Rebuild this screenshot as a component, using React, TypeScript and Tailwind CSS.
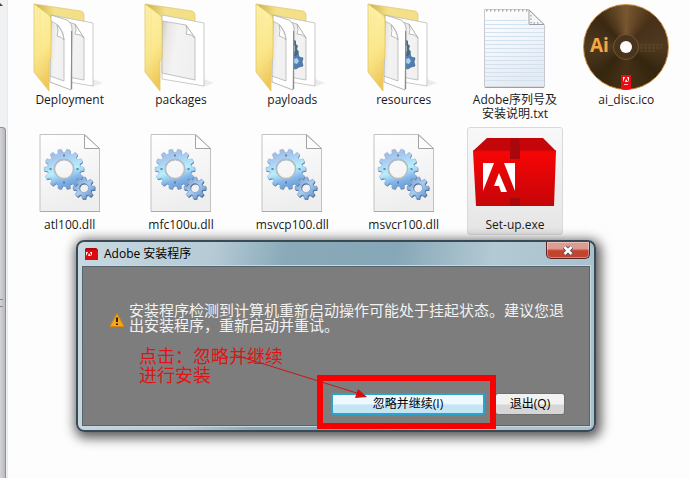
import React from 'react';

function gearPath(cx: number, cy: number, outer: number, inner: number, hole: number, teeth: number) {
  const points: string[] = [];
  const step = (Math.PI * 2) / teeth;
  const at = (r: number, a: number) => `${(cx + r * Math.cos(a)).toFixed(2)} ${(cy + r * Math.sin(a)).toFixed(2)}`;
  for (let i = 0; i < teeth; i++) {
    const a = i * step;
    points.push(at(inner, a - step * 0.34), at(outer, a - step * 0.2), at(outer, a + step * 0.2), at(inner, a + step * 0.34));
  }
  return `M${points.join('L')}Z M${cx - hole} ${cy}a${hole} ${hole} 0 1 0 ${hole * 2} 0a${hole} ${hole} 0 1 0 ${-hole * 2} 0Z`;
}

// Gradients shared by every file icon
function IconDefs() {
  return (
    <svg className="absolute size-0" aria-hidden="true">
      <defs>
        <linearGradient id="flap" x1="0" y1="0" x2="0.2" y2="1">
          <stop offset="0" stopColor="#fdf3ae" />
          <stop offset="0.6" stopColor="#fbe88c" />
          <stop offset="1" stopColor="#f0c95c" />
        </linearGradient>
        <linearGradient id="back" x1="0" y1="0" x2="1" y2="0">
          <stop offset="0" stopColor="#c9ae48" />
          <stop offset="0.4" stopColor="#f3e08a" />
          <stop offset="1" stopColor="#f3df85" />
        </linearGradient>
        <linearGradient id="sheet" x1="0" y1="0" x2="1" y2="0.3">
          <stop offset="0" stopColor="#cfc8bc" />
          <stop offset="0.2" stopColor="#e9e7e4" />
          <stop offset="0.5" stopColor="#f3f3f3" />
          <stop offset="1" stopColor="#f0f0f1" />
        </linearGradient>
        <linearGradient id="page" x1="0" y1="0" x2="0.3" y2="1">
          <stop offset="0" stopColor="#ffffff" />
          <stop offset="1" stopColor="#eeeeef" />
        </linearGradient>
        <linearGradient id="note" x1="0" y1="0" x2="0.4" y2="1">
          <stop offset="0" stopColor="#ffffff" />
          <stop offset="1" stopColor="#e6ebf3" />
        </linearGradient>
        <linearGradient id="gear" x1="0.3" y1="0" x2="0.6" y2="1">
          <stop offset="0" stopColor="#9fb6e0" />
          <stop offset="0.25" stopColor="#a9cdf1" />
          <stop offset="0.55" stopColor="#b6effb" />
          <stop offset="0.78" stopColor="#82b6ec" />
          <stop offset="1" stopColor="#6c9ad6" />
        </linearGradient>
        <linearGradient id="smallGear" x1="0" y1="0" x2="1" y2="1">
          <stop offset="0" stopColor="#7396c2" />
          <stop offset="0.5" stopColor="#a9cdf2" />
          <stop offset="1" stopColor="#5384c2" />
        </linearGradient>
        <linearGradient id="carton" x1="0" y1="0" x2="0" y2="1">
          <stop offset="0" stopColor="#f80506" />
          <stop offset="1" stopColor="#c50508" />
        </linearGradient>
      </defs>
    </svg>
  );
}

function FolderIcon({ sheets = 2, gears = false }: { sheets?: number; gears?: boolean }) {
  return (
    <svg className="size-[88px]" viewBox="0 0 88 88" aria-hidden="true">
      <path d="M67 76L77 80L66 84Z" fill="#ececec" />
      <path d="M8 1L55 8Q58 9 58 12V32L25 26Z" fill="url(#back)" stroke="#dfc56c" strokeWidth="0.7" />
      <path d="M25 12L67 20V83L25 76Z" fill="#fff" stroke="#bdbdbd" strokeWidth="0.8" />
      {sheets === 1 ? (
        <>
          <path d="M25 18L49 22L58 35V77L25 70Z" fill="url(#sheet)" stroke="#b4b4b4" strokeWidth="0.8" />
          <path d="M49 22Q51 28 49 31Q55 31 58 35Z" fill="#fff" stroke="#a9a9a9" strokeWidth="0.8" />
        </>
      ) : (
        <>
          <path d="M42 19L49 21L58 35V77L42 74Z" fill="url(#sheet)" stroke="#b4b4b4" strokeWidth="0.8" />
          <path d="M49 21Q51 28 49 31Q55 31 58 35Z" fill="#fff" stroke="#a9a9a9" strokeWidth="0.8" />
          {gears && (
            <>
              <path d="M45 36l3 2v3l2 2-1 3 2 3-2 4-4 2Z" fill="#4c6b88" />
              <path d="M45 42l2 1v5l-2 2Z" fill="#9fc3df" />
              <path d="M45 52l2 1 3-3 1 4 4 1-1 4 1 4-4 1-3 2-3-1Z" fill="#4b80b8" stroke="#35536f" strokeWidth="0.6" />
              <path d="M46 56l3-1 2 3-2 3-3-1Z" fill="#abd0ee" />
            </>
          )}
          <path d="M25 12L41 17Q46 20 46 26L45 87L24 79Z" fill="#fff" stroke="#a7a7a7" strokeWidth="0.8" />
          <path d="M45.600 28V86" stroke="#8d8d8d" strokeWidth="1.200" />
          <path d="M25 18L32 22Q38 29 38 36V78L24 73Z" fill="url(#sheet)" stroke="#b4b4b4" strokeWidth="0.8" />
          <path d="M31 22Q33 28 31 33Q36 34 38 37Q37 28 31 22Z" fill="#fff" stroke="#a9a9a9" strokeWidth="0.8" />
        </>
      )}
      <path d="M8 1L23 12Q25 14 25 17V55L23 58V88L8 69Z" fill="url(#flap)" stroke="#e3c765" strokeWidth="0.8" />
      <path d="M11 4V70M14 7V73" stroke="#f5e08c" strokeWidth="0.6" />
    </svg>
  );
}

function TextIcon() {
  return (
    <svg className="size-[88px]" viewBox="0 0 88 88" aria-hidden="true">
      <path d="M13.500 6.500H58L73.500 22V84H13.500Z" fill="url(#note)" stroke="#c6cad0" />
      <path d="M14 84.500H73" stroke="#9b9fa5" />
      <path d="M14 17.500H56M14 21.500H57M14 25.500H73M14 29.500H73M14 33.500H73M14 37.500H73M14 41.500H73M14 45.500H73M14 49.500H73M14 53.500H73M14 57.500H73M14 61.500H73M14 65.500H73M14 69.500H73M14 73.500H73M14 77.500H73" stroke="#d3e1ef" />
      <path d="M15 7.500H58" stroke="#aaa" strokeWidth="2" strokeDasharray="1.500 2.500" />
      <path d="M58 7V21.500H73Z" fill="#f4f5f7" stroke="#9b9fa4" />
      <path d="M60 12V20H68" fill="none" stroke="#8a8a8a" strokeDasharray="1.500 2" />
    </svg>
  );
}

function DllIcon() {
  const big = gearPath(38, 41, 20, 16.5, 10, 14);
  const small = gearPath(58, 60, 11, 8, 4.5, 8);
  return (
    <svg className="size-[88px]" viewBox="0 0 88 88" aria-hidden="true">
      <path d="M14 6.500H59L73.500 21V83.500H14Z" fill="url(#page)" stroke="#c2c2c2" />
      <path d="M14 83.500H74" stroke="#a9a9a9" />
      <path d="M58.500 7V20.500H73.500Z" fill="#fdfdfd" stroke="#a3a3a3" />
      <path d={small} transform="translate(.6 1)" fill="#44668f" fillRule="evenodd" />
      <path d={small} fill="url(#smallGear)" stroke="#6288b6" strokeWidth="0.5" fillRule="evenodd" />
      <path d={big} transform="translate(.4 1)" fill="#5476a0" fillRule="evenodd" />
      <path d={big} fill="url(#gear)" stroke="#8fb0d6" strokeWidth="0.5" fillRule="evenodd" />
      <circle cx="38" cy="41" r="9.500" fill="none" stroke="#b9bdc1" strokeWidth="1.500" />
      <path d="M38 26.500v2M38 53.500v2M23.500 41h2M50.500 41h2" stroke="#4a7093" strokeWidth="1.500" />
    </svg>
  );
}

function DiscIcon() {
  return (
    <div className="relative size-[88px]">
      <div className="absolute inset-px rounded-full border border-[#c98a3d] bg-[conic-gradient(from_0deg,#785730,#463018_12%,#4f3a20_25%,#35250f_36%,#453117_50%,#35260f_62%,#4f3a20_75%,#3a2812_88%,#785730)]" />
      <svg className="relative size-[88px]" viewBox="0 0 88 88" aria-hidden="true">
        <circle cx="44" cy="44" r="12.500" fill="#4a351c" stroke="#715636" />
        <circle cx="44" cy="44" r="6" fill="#fff" />
        <path d="M58 42H82M58 45H80M58 48H74" stroke="#6b5230" strokeWidth="0.8" strokeDasharray="3 1" />
        <text x="8" y="49" fill="#f6a643" fontSize="19" fontWeight="700" fontFamily="Open Sans, sans-serif">Ai</text>
        <path d="M39 72H49V86Q44 88 39 86Z" fill="#ef0a12" />
        <path d="M41 74h2l-2 5ZM45 74h2v5ZM44 76l2 3h-3Z" fill="#fff" />
        <path d="M42 81.500H46" stroke="#fbb" />
      </svg>
    </div>
  );
}

function SetupIcon() {
  return (
    <svg className="size-[88px]" viewBox="0 0 88 88" aria-hidden="true">
      <path d="M16 10H72L85 23H2Z" fill="#c4060a" />
      <path d="M2 23H85L83 78H5Z" fill="url(#carton)" />
      <path d="M2 23H85" stroke="#e0080a" />
      <path d="M40 10H48L49 23V31H39V23Z" fill="#a8080b" />
      <path d="M39 70H49V78H39Z" fill="#a8080b" />
      <path d="M12 35H23L12 63ZM33 35H44V63ZM28 45L36 64H30L28 58H23Z" fill="#fff" />
    </svg>
  );
}

const files = [
  { name: 'Deployment', icon: <FolderIcon /> },
  { name: 'packages', icon: <FolderIcon sheets={1} /> },
  { name: 'payloads', icon: <FolderIcon gears /> },
  { name: 'resources', icon: <FolderIcon gears /> },
  { name: 'Adobe序列号及安装说明.txt', icon: <TextIcon /> },
  { name: 'ai_disc.ico', icon: <DiscIcon /> },
  { name: 'atl100.dll', icon: <DllIcon /> },
  { name: 'mfc100u.dll', icon: <DllIcon /> },
  { name: 'msvcp100.dll', icon: <DllIcon /> },
  { name: 'msvcr100.dll', icon: <DllIcon /> },
  { name: 'Set-up.exe', icon: <SetupIcon />, selected: true },
];

function ScrollBar() {
  return (
    <div className="flex w-2 shrink-0 flex-col border-r border-[#e3eaf1] bg-[#eff1f3]">
      <div className="h-[127px]">
        <svg className="mt-px h-2 w-1" viewBox="0 0 4 8" aria-hidden="true">
          <path d="M0 2L3 5H0Z" fill="#444" />
        </svg>
      </div>
      <div className="mr-px flex flex-1 items-center rounded-tr-sm border-t border-r border-[#8e8f92] bg-linear-to-r from-[#d3d4d7] to-[#b9babd]">
        <div className="h-2 w-[3px] border-y border-[#888]" />
      </div>
    </div>
  );
}

function SetupDialog() {
  return (
    <section
      role="dialog"
      aria-labelledby="dialog-title"
      className="absolute top-[240px] left-[76px] w-[520px] rounded-lg border-2 border-[#3a4a54] bg-[linear-gradient(100deg,#c9d9e1_0%,#b5cad5_25%,#8aaab9_38%,#86a7b7_58%,#b3c9d3_76%,#a6c0cc_100%)] px-1 pb-1 shadow-[2px_3px_12px_3px_rgba(0,0,0,0.65)]"
    >
      <header className="flex h-6 items-start justify-between">
        <div className="flex items-center gap-1 pt-1 pl-0.5">
          <svg className="size-4" viewBox="0 0 16 16" aria-hidden="true">
            <path d="M2 2H12L14 4V14H1V4Z" fill="#d90a10" />
            <path d="M2 2H12L14 4H1Z" fill="#a8070b" />
            <path d="M2 6H4L2 10ZM6 6H8V10ZM5 7L7 10H4Z" fill="#fff" />
          </svg>
          <h1 id="dialog-title" className="text-xs leading-4 text-black">
            Adobe 安装程序
          </h1>
        </div>
        <button
          type="button"
          aria-label="Close"
          className="flex h-[17px] w-11 items-center justify-center rounded-b-[5px] border border-t-0 border-[#57262a] bg-linear-to-b from-[#dd9c92] from-40% to-[#c2432f] to-55% shadow-[inset_0_0_0_1px_rgba(255,255,255,0.35)]"
        >
          <svg className="h-[11px] w-3" viewBox="0 0 12 11" aria-hidden="true">
            <path d="M2.500 2L9.500 9M9.500 2L2.500 9" stroke="#4a4f63" strokeWidth="4.500" />
            <path d="M2.500 2L9.500 9M9.500 2L2.500 9" stroke="#fff" strokeWidth="2.500" />
          </svg>
        </button>
      </header>

      <div className="relative border border-[#56656d] bg-[#7d7d7d] pt-9 pb-2.5 outline outline-[#c6d8e1]">
        <div className="flex items-center gap-1 pl-[26px]">
          <svg className="mt-1 size-4 shrink-0" viewBox="0 0 16 16" aria-hidden="true">
            <path d="M8 1.500L15 14.500H1Z" fill="#f6a81c" stroke="#d98608" strokeLinejoin="round" />
            <path d="M8 5.500V10M8 11.500V13" stroke="#2b2106" strokeWidth="2" />
          </svg>
          <p className="w-[440px] text-[15px] leading-[15px] text-[#f2f2f2]">
            安装程序检测到计算机重新启动操作可能处于挂起状态。建议您退出安装程序，重新启动并重试。
          </p>
        </div>

        <p className="mt-3.5 ml-14 w-[150px] text-lg leading-[19px] text-[#e01414]">点击：忽略并继续进行安装</p>

        <div className="mt-2 flex justify-end gap-2.5 pr-6">
          <div className="relative z-10 w-[154px]">
            <button
              type="button"
              className="block h-[22px] w-full rounded-[3px] border-2 border-[#2aa3cd] bg-linear-to-b from-[#eff8fd] from-50% to-[#c4e5f6] to-55% text-xs leading-4 text-black"
            >
              忽略并继续(I)
            </button>
            <div className="pointer-events-none absolute -top-[18px] -right-[11px] -bottom-[14px] -left-[14px] border-6 border-[#f80000]" />
          </div>
          <button
            type="button"
            className="h-[22px] w-[70px] rounded-[3px] border border-[#707070] bg-linear-to-b from-[#f2f2f2] from-50% to-[#d6d6d6] to-55% text-xs leading-4 text-black"
          >
            退出(Q)
          </button>
        </div>

        <svg className="pointer-events-none absolute top-[84px] left-[150px] z-20 h-[50px] w-[140px]" viewBox="0 0 140 50" aria-hidden="true">
          <path d="M2 4L127 43" stroke="#c81818" />
          <path d="M125 38L134 46L122 47Z" fill="#d80d0d" />
        </svg>
      </div>
    </section>
  );
}

export default function App() {
  return (
    <div className="relative flex min-h-screen overflow-hidden bg-[#fdfdfd] font-['Open_Sans','Noto_Sans_CJK_SC',sans-serif] text-[#1a1a1a]">
      <IconDefs />
      <ScrollBar />
      <main className="flex-1 pt-0.5 pr-2 pl-1.5">
        <ul className="grid grid-cols-6 items-start justify-items-center gap-y-[3px]">
          {files.map((file) => (
            <li
              key={file.name}
              className={
                file.selected
                  ? 'flex w-24 flex-col items-center gap-0.5 rounded-[3px] border border-[#d9d9d9] bg-linear-to-b from-[#f8f8f8] to-[#e5e5e5] pb-0.5'
                  : 'flex w-24 flex-col items-center gap-0.5 border border-transparent pb-0.5'
              }
            >
              {file.icon}
              <span className="text-center text-xs leading-[14px]">{file.name}</span>
            </li>
          ))}
        </ul>
      </main>
      <SetupDialog />
    </div>
  );
}
